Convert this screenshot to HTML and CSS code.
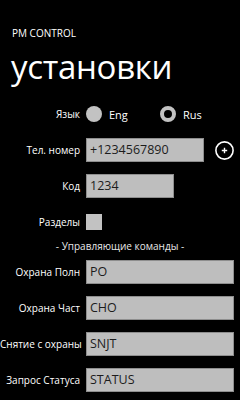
FILE: index.html
```html
<!DOCTYPE html>
<html lang="ru">
<head>
<meta charset="utf-8">
<link rel="stylesheet" href="styles.css">
</head>
<body>
<header class="head">
  <div class="app-title">PM CONTROL</div>
  <h1 class="page-title">установки</h1>
</header>
<main class="form">
  <div class="row">
    <span class="label">Язык</span>
    <div class="control radios">
      <span class="radio"><span class="dot dot-on"></span>Eng</span>
      <span class="radio"><span class="dot dot-ring"></span>Rus</span>
    </div>
  </div>
  <div class="row">
    <span class="label">Тел. номер</span>
    <div class="control inline">
      <span class="field field-tel">+1234567890</span>
      <svg class="add" width="19" height="19" viewBox="0 0 19 19">
        <circle cx="9.5" cy="9.5" r="8.6" fill="none" stroke="#fff" stroke-width="1.6"/>
        <path d="M9.5 6.8v5.4M6.8 9.5h5.4" stroke="#fff" stroke-width="1.4"/>
      </svg>
    </div>
  </div>
  <div class="row">
    <span class="label">Код</span>
    <div class="control"><span class="field field-code">1234</span></div>
  </div>
  <div class="row">
    <span class="label">Разделы</span>
    <div class="control"><span class="check"></span></div>
  </div>
  <div class="sep">- Управляющие команды -</div>
  <div class="row">
    <span class="label">Охрана Полн</span>
    <div class="control"><span class="field">PO</span></div>
  </div>
  <div class="row">
    <span class="label">Охрана Част</span>
    <div class="control"><span class="field">CHO</span></div>
  </div>
  <div class="row">
    <span class="label">Снятие с охраны</span>
    <div class="control"><span class="field">SNJT</span></div>
  </div>
  <div class="row">
    <span class="label">Запрос Статуса</span>
    <div class="control"><span class="field">STATUS</span></div>
  </div>
</main>
</body>
</html>
```
FILE: styles.css
```css
html, body {
  margin: 0;
  padding: 0;
  background: #000;
  color: #fff;
  font-family: "Open Sans", "Noto Sans", sans-serif;
}
body {
  width: 240px;
  height: 400px;
  overflow: hidden;
}
.head {
  padding: 27px 0 0 12px;
  height: 69px;
}
.app-title {
  font-size: 10px;
  line-height: 12px;
}
.page-title {
  margin: 0;
  font-weight: 400;
  font-size: 33px;
  line-height: 40px;
  margin-left: -1px;
  margin-top: 8px;
  letter-spacing: -0.3px;
}
.form {
  display: flex;
  flex-direction: column;
}
.row {
  display: grid;
  grid-template-columns: 80px 148px;
  column-gap: 6px;
  height: 36px;
  align-items: center;
}
.label {
  text-align: right;
  font-size: 10px;
  white-space: nowrap;
}
.control {
  display: flex;
  align-items: center;
}
.radios {
  gap: 0;
}
.radio {
  display: flex;
  align-items: center;
  font-size: 11px;
  width: 80px;
}
.dot {
  width: 16px;
  height: 16px;
  border-radius: 50%;
  box-sizing: border-box;
  margin-right: 7px;
}
.dot-on {
  background: #c2c2c2;
}
.dot-ring {
  border: 4.5px solid #c2c2c2;
}
.field {
  display: block;
  box-sizing: border-box;
  width: 148px;
  height: 24px;
  background: #bebebe;
  border: 1px solid #8e8e8e;
  color: #1c1c1c;
  font-size: 12.5px;
  line-height: 22px;
  padding-left: 3px;
}
.field-tel {
  width: 118px;
}
.field-code {
  width: 88px;
}
.inline .add {
  margin-left: 11px;
}
.check {
  display: block;
  width: 16px;
  height: 16px;
  background: #c2c2c2;
}
.sep {
  height: 14px;
  line-height: 12px;
  text-align: center;
  font-size: 10px;
  color: #e8e8e8;
}
```
